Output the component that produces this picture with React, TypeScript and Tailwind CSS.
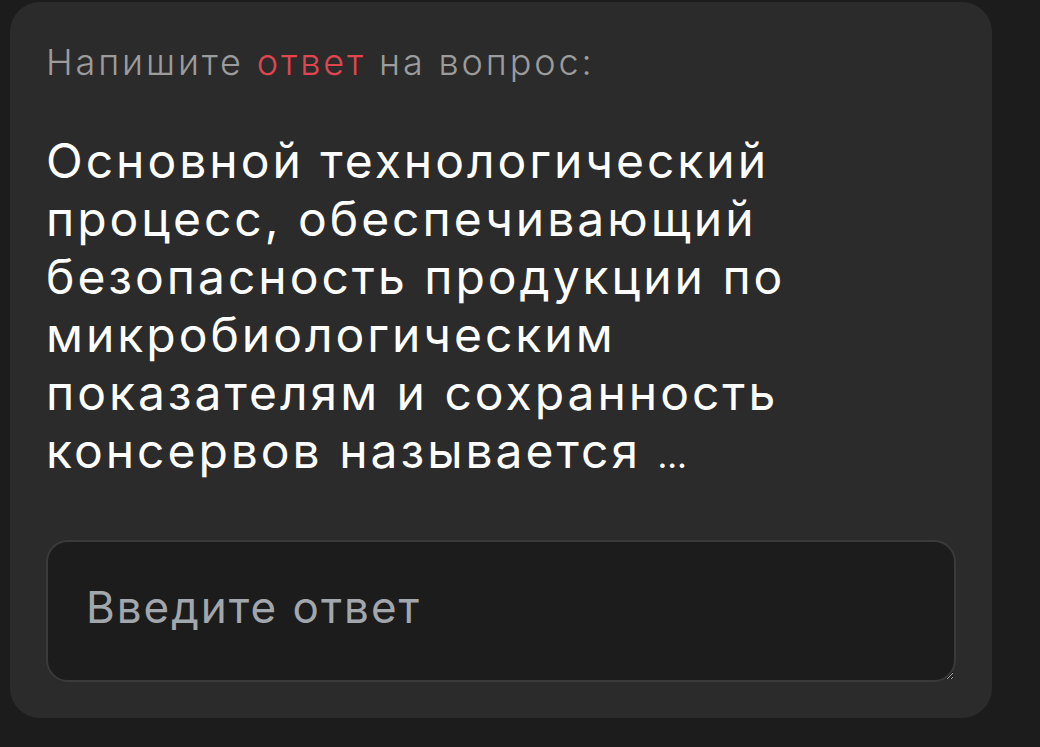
import React from "react";

export default function App() {
  return (
    <div className="min-h-screen w-full bg-[#1c1c1c] pl-[10px] pt-[2px]" style={{ fontFamily: "Inter, 'Noto Sans', sans-serif" }}>
      <div className="w-[982px] rounded-[30px] bg-[#2b2b2b] px-[36px] pt-[40px] pb-[36px]">
        <div className="text-[36px] leading-[40px] font-light tracking-[0.08em] text-[#9c9c9c]">
          Напишите <span className="text-[#e0464f]">ответ</span> на вопрос:
        </div>
        <div className="mt-[50px] text-[48px] leading-[58px] tracking-[0.062em] text-white">
          Основной технологический
          <br />
          процесс, обеспечивающий
          <br />
          безопасность продукции по
          <br />
          микробиологическим
          <br />
          показателям и сохранность
          <br />
          консервов называется <span className="text-[34px] leading-none tracking-normal">…</span>
        </div>
        <textarea
          className="mt-[60px] block h-[142px] w-full rounded-[22px] border-2 border-[#3a3a3a] bg-[#1c1c1c] px-[38px] pt-[40px] text-[44px] leading-[50px] tracking-[0.045em] text-white outline-none placeholder:text-[#a2a6ad]"
          placeholder="Введите ответ"
        />
      </div>
    </div>
  );
}
